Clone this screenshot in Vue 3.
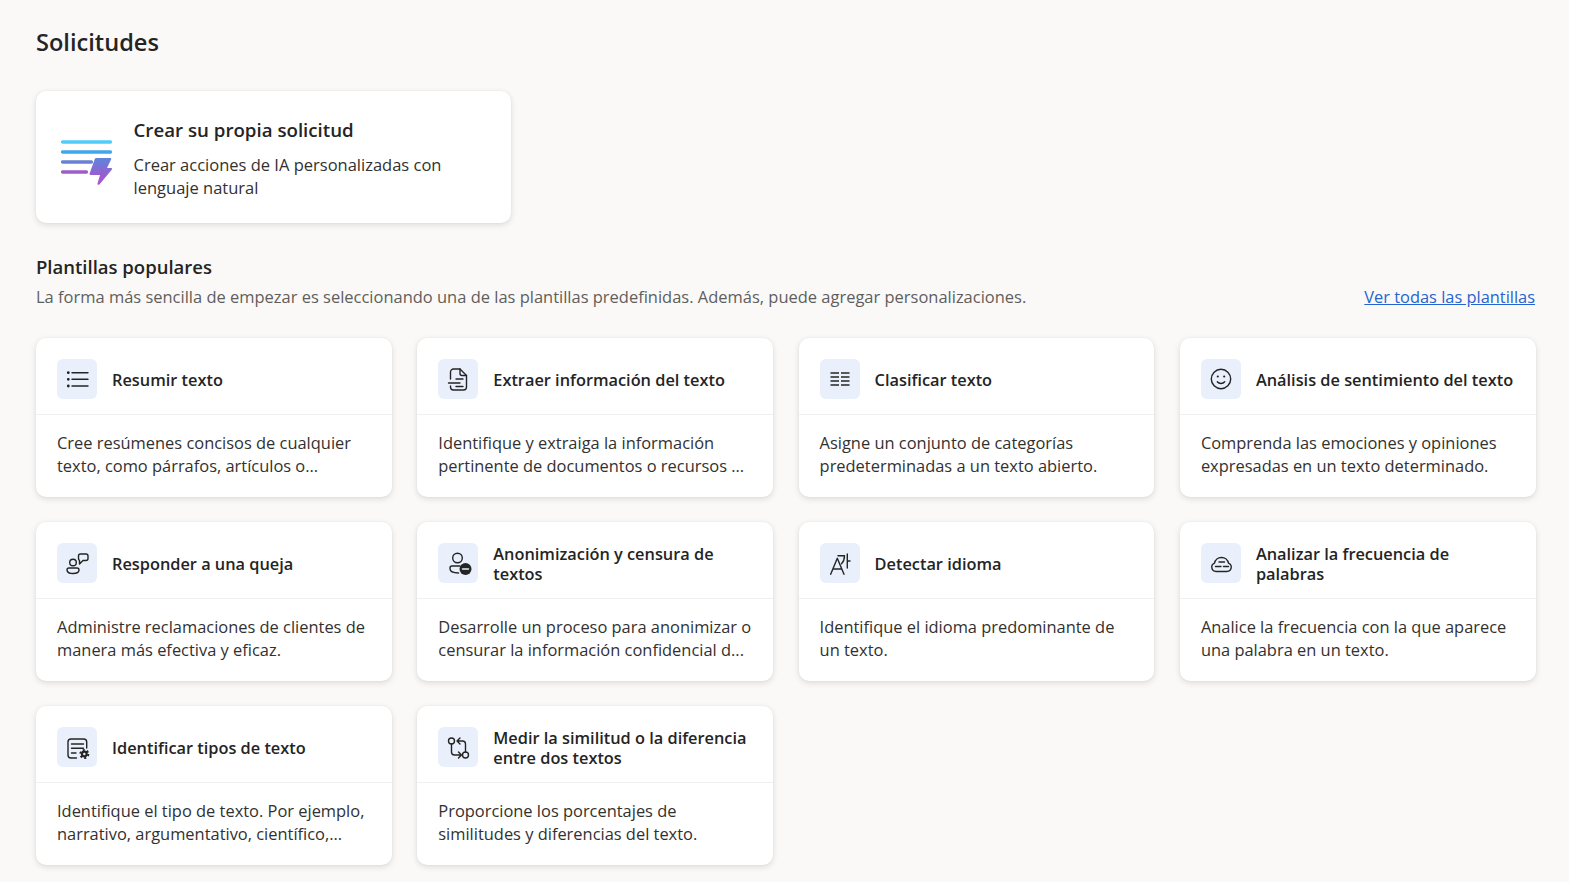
<script setup>
const cards = [
  { icon: 'list', title: 'Resumir texto', text: 'Cree resúmenes concisos de cualquier texto, como párrafos, artículos o...' },
  { icon: 'doc', title: 'Extraer información del texto', text: 'Identifique y extraiga la información pertinente de documentos o recursos ...' },
  { icon: 'columns', title: 'Clasificar texto', text: 'Asigne un conjunto de categorías predeterminadas a un texto abierto.' },
  { icon: 'smile', title: 'Análisis de sentimiento del texto', text: 'Comprenda las emociones y opiniones expresadas en un texto determinado.' },
  { icon: 'chat', title: 'Responder a una queja', text: 'Administre reclamaciones de clientes de manera más efectiva y eficaz.' },
  { icon: 'person', title: 'Anonimización y censura de textos', text: 'Desarrolle un proceso para anonimizar o censurar la información confidencial d...' },
  { icon: 'lang', title: 'Detectar idioma', text: 'Identifique el idioma predominante de un texto.' },
  { icon: 'cloud', title: 'Analizar la frecuencia de palabras', text: 'Analice la frecuencia con la que aparece una palabra en un texto.' },
  { icon: 'gear', title: 'Identificar tipos de texto', text: 'Identifique el tipo de texto. Por ejemplo, narrativo, argumentativo, científico,...' },
  { icon: 'compare', title: 'Medir la similitud o la diferencia entre dos textos', text: 'Proporcione los porcentajes de similitudes y diferencias del texto.' },
]
</script>

<template>
  <main class="page">
    <h1 class="page-title">Solicitudes</h1>

    <section class="create-card">
      <svg class="create-icon" width="52" height="48" viewBox="0 0 52 48" fill="none">
        <defs>
          <linearGradient id="bolt" gradientUnits="userSpaceOnUse" x1="40" y1="18" x2="40" y2="46">
            <stop offset="0" stop-color="#5a88de" />
            <stop offset="0.6" stop-color="#9460d0" />
            <stop offset="1" stop-color="#ae55c8" />
          </linearGradient>
        </defs>
        <g stroke-width="3.300" stroke-linecap="round">
          <line x1="1.500" y1="3" x2="49.500" y2="3" stroke="#4fcdfa" />
          <line x1="1.500" y1="13" x2="49.500" y2="13" stroke="#3fa8ec" />
          <line x1="1.500" y1="23" x2="30.500" y2="23" stroke="#6a80d4" />
          <line x1="1.500" y1="33" x2="25.500" y2="33" stroke="#a05cc8" />
        </g>
        <path d="M35 19h14.200c.8 0 1.200.7.900 1.400L46 29h4.200c.9 0 1.300 1 .7 1.600L38.400 45.400c-.8.9-2.200.2-1.900-1L39 36h-9.400c-.8 0-1.300-.7-1-1.400L33.800 20c.2-.6.7-1 1.200-1z" fill="url(#bolt)" />
      </svg>
      <div class="create-copy">
        <h2 class="create-title">Crear su propia solicitud</h2>
        <p class="create-text">Crear acciones de IA personalizadas con lenguaje natural</p>
      </div>
    </section>

    <h2 class="section-title">Plantillas populares</h2>
    <div class="section-row">
      <p class="section-text">La forma más sencilla de empezar es seleccionando una de las plantillas predefinidas. Además, puede agregar personalizaciones.</p>
      <a class="section-link" href="#">Ver todas las plantillas</a>
    </div>

    <div class="grid">
      <article v-for="card in cards" :key="card.title" class="card">
        <header class="card-head">
          <span class="card-icon">
            <svg width="24" height="24" viewBox="0 0 24 24" fill="none" stroke="#242424" stroke-width="1.400" stroke-linecap="round" stroke-linejoin="round">
              <template v-if="card.icon === 'list'">
                <path d="M7 5.700h16M7 12.300h16M7 19h16" />
                <circle cx="3.300" cy="5.700" r=".7" fill="#242424" /><circle cx="3.300" cy="12.300" r=".7" fill="#242424" /><circle cx="3.300" cy="19" r=".7" fill="#242424" />
              </template>
              <template v-else-if="card.icon === 'doc'">
                <path d="M4.500 12V5a3 3 0 0 1 3-3h6.500l6.500 6.500V20a3 3 0 0 1-3 3h-10a3 3 0 0 1-3-3v-1" />
                <path d="M14 2v4.500A2 2 0 0 0 16 8.500h4.500" />
                <path d="M2.500 16h11.500M10 12h7M10 19.500h7" />
              </template>
              <template v-else-if="card.icon === 'columns'">
                <path d="M2.500 6h8.500M13 6h8.500M2.500 10h8.500M13 10h8.500M2.500 14h8.500M13 14h8.500M2.500 18h8.500M13 18h8.500" stroke-width="1.500" stroke-linecap="butt" />
              </template>
              <template v-else-if="card.icon === 'smile'">
                <circle cx="12" cy="12" r="9.700" />
                <circle cx="8.800" cy="9.500" r="1.100" fill="#242424" stroke="none" /><circle cx="15.200" cy="9.500" r="1.100" fill="#242424" stroke="none" />
                <path d="M8.300 14.800c1.800 2.300 5.600 2.300 7.400 0" />
              </template>
              <template v-else-if="card.icon === 'chat'">
                <circle cx="8" cy="11.500" r="3.300" />
                <path d="M4 17h8a2 2 0 0 1 2 2c0 2.200-2.700 3.500-6 3.500S2 21.200 2 19a2 2 0 0 1 2-2z" />
                <path d="M15.500 3h5.500a2 2 0 0 1 2 2v2.500a2 2 0 0 1-2 2h-3L14.500 13V9.500a2.500 2.500 0 0 1-1-2V5a2 2 0 0 1 2-2z" />
              </template>
              <template v-else-if="card.icon === 'person'">
                <circle cx="11.500" cy="7" r="4.800" />
                <path d="M12.500 22c-5 0-8.500-1.500-8.500-4.500V17a2 2 0 0 1 2-2h8" />
                <circle cx="19.500" cy="18" r="6" fill="#242424" stroke="none" />
                <path d="M16.500 18h6" stroke="#e9f0fb" stroke-width="1.500" />
              </template>
              <template v-else-if="card.icon === 'lang'">
                <path d="M2.700 23.300 9.300 7.300l6.700 16M5 18h8.500" />
                <path d="M10 4.700h6.500c0 3.500-1 6-3 8M19.300 3v14M19.300 10h2.700" />
              </template>
              <template v-else-if="card.icon === 'cloud'">
                <path d="M7 20.500a4.300 4.300 0 0 1-1.500-8.300A7 7 0 0 1 12.500 6.500a7 7 0 0 1 7 5.700 4.300 4.300 0 0 1-1.500 8.300z" />
                <path d="M10 11h5.500M6.500 15.500H12M14.500 15.500h5" />
              </template>
              <template v-else-if="card.icon === 'gear'">
                <path d="M11.500 23H6a3 3 0 0 1-3-3V7a3 3 0 0 1 3-3h12.700a3 3 0 0 1 3 3v6" />
                <path d="M6.500 9h12M6.500 13.300h12M6.500 18H11" />
                <circle cx="19.300" cy="19" r="3.400" fill="#242424" stroke="none" />
                <circle cx="19.300" cy="19" r="4" stroke="#242424" stroke-width="2" stroke-linecap="butt" stroke-dasharray="2 2.190" />
                <circle cx="19.300" cy="19" r="1.200" fill="#e9f0fb" stroke="none" />
              </template>
              <template v-else>
                <circle cx="5.500" cy="6" r="3" /><circle cx="19.500" cy="20" r="3" />
                <path d="M5.500 9v8a3 3 0 0 0 3 3h7M12.500 17l3 3-3 3" />
                <path d="M19.500 17V9a3 3 0 0 0-3-3H11M14 3l-3 3 3 3" />
              </template>
            </svg>
          </span>
          <h3 class="card-title">{{ card.title }}</h3>
        </header>
        <p class="card-text">{{ card.text }}</p>
      </article>
    </div>
  </main>
</template>

<style>
html, body { margin: 0; background: #faf9f8; }
</style>

<style scoped>
.page {
  box-sizing: border-box;
  width: 1569px;
  height: 882px;
  overflow: hidden;
  padding: 25px 34px 0 36px;
  font-family: "Open Sans", "Noto Sans", sans-serif;
  color: #242424;
  background: #faf9f8;
}
.page-title {
  margin: 0;
  font-size: 23.600px;
  line-height: 34px;
  font-weight: 600;
}
.create-card {
  box-sizing: border-box;
  display: flex;
  align-items: center;
  width: 475px;
  height: 132px;
  margin-top: 32px;
  padding: 0 24px;
  background: #fff;
  border-radius: 10px;
  box-shadow: 0 0 2px rgba(0,0,0,.06), 0 2px 6px rgba(0,0,0,.12);
}
.create-icon { flex: none; margin: 12px 0 0 1px; }
.create-copy { margin: 1px 0 0 20.500px; }
.create-title {
  margin: 0;
  font-size: 18.700px;
  line-height: 26px;
  font-weight: 600;
}
.create-text {
  margin: 10px 0 0;
  font-size: 16.500px;
  line-height: 23px;
  color: #323130;
}
.section-title {
  margin: 31px 0 0;
  font-size: 18.500px;
  line-height: 26px;
  font-weight: 600;
}
.section-row {
  display: flex;
  justify-content: space-between;
  align-items: baseline;
  margin-top: 5px;
  font-size: 16.480px;
  line-height: 23px;
}
.section-text { margin: 0; color: #605e5c; }
.section-link { color: #2564cf; text-decoration: underline; font-size: 16.400px; }
.grid {
  display: grid;
  grid-template-columns: repeat(4, 355.800px);
  column-gap: 25.500px;
  row-gap: 25px;
  margin-top: 30px;
}
.card {
  box-sizing: border-box;
  height: 159px;
  background: #fff;
  border-radius: 10px;
  box-shadow: 0 0 2px rgba(0,0,0,.06), 0 2px 6px rgba(0,0,0,.12);
}
.card-head {
  box-sizing: border-box;
  display: flex;
  align-items: center;
  gap: 15px;
  height: 77px;
  padding: 7px 20px 0 21px;
  border-bottom: 1px solid #f0f0f0;
}
.card-icon {
  flex: none;
  display: flex;
  align-items: center;
  justify-content: center;
  width: 40px;
  height: 40px;
  margin-top: -1px;
  border-radius: 6px;
  background: #e9f0fb;
}
.card-icon svg { overflow: visible; }
.card-title {
  margin: 0;
  font-size: 16.330px;
  line-height: 20px;
  font-weight: 600;
  color: #242424;
}
.card-text {
  margin: 0;
  padding: 16px 21px 0;
  font-size: 16.430px;
  line-height: 23px;
  color: #323130;
}
</style>
